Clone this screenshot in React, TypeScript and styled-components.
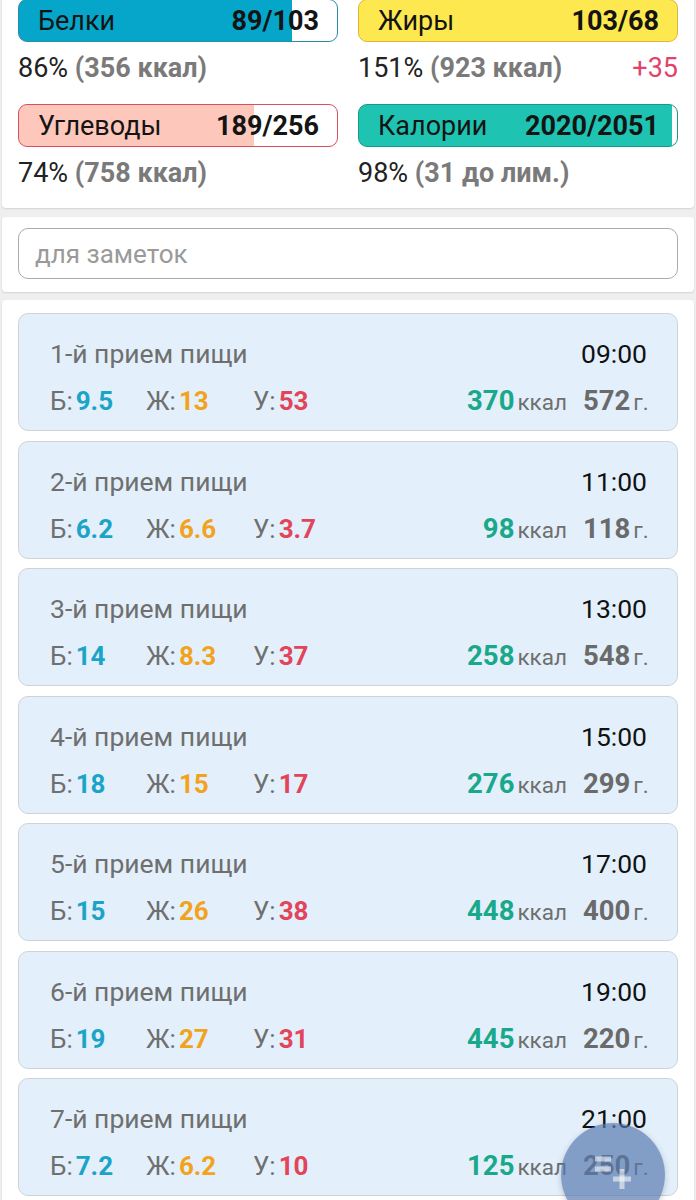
import styled, { createGlobalStyle } from "styled-components";

const GlobalStyle = createGlobalStyle`
  html, body {
    margin: 0;
    padding: 0;
    background: #efefef;
    font-family: Roboto, "Noto Sans", "Liberation Sans", sans-serif;
  }
  * { box-sizing: border-box; }
`;

const c = {
  protein: "#06a6cb",
  proteinBorder: "#2b8ca6",
  fat: "#fde94f",
  fatBorder: "#e1b43c",
  carb: "#fdc8bb",
  carbBorder: "#d8505c",
  kcal: "#1ec3b1",
  kcalBorder: "#15998b",
  blueText: "#1ba4c7",
  orangeText: "#f2a31e",
  redText: "#e2445a",
  tealText: "#1aa88b",
  grey: "#6f6f6f",
};

const Page = styled.div`
  width: 696px;
  height: 1200px;
  overflow: hidden;
  position: relative;
  padding: 0 2px;
`;

const Panel = styled.section`
  background: #ffffff;
  border-radius: 0 0 4px 4px;
  box-shadow: 0 1px 2px rgba(0, 0, 0, 0.12);
`;

const SummaryPanel = styled(Panel)`
  margin-top: -1px;
  padding: 0 16px 9px;
  display: grid;
  grid-template-columns: 1fr 1fr;
  column-gap: 20px;
  row-gap: 10px;
`;

const Cell = styled.div`
  display: flex;
  flex-direction: column;
`;

const Bar = styled.div<{ $fill: string; $border: string; $pct: number }>`
  height: 43px;
  border-radius: 9px;
  border: 1.5px solid ${(p) => p.$border};
  background: linear-gradient(
    90deg,
    ${(p) => p.$fill} 0%,
    ${(p) => p.$fill} ${(p) => p.$pct}%,
    #ffffff ${(p) => p.$pct}%
  );
  display: flex;
  align-items: center;
  justify-content: space-between;
  padding: 0 18px 0 19px;
  font-size: 27px;
  color: #141414;
`;

const BarValue = styled.span`
  font-weight: 700;
`;

const StatLine = styled.div`
  height: 52px;
  line-height: 52px;
  display: flex;
  justify-content: space-between;
  font-size: 27px;
  color: #222;
`;

const StatMuted = styled.span`
  color: #7a7a7a;
  font-weight: 700;
`;

const Over = styled.span`
  color: #e2436a;
`;

const NotesPanel = styled(Panel)`
  margin-top: 9px;
  border-radius: 4px;
  padding: 11px 16px 13px;
`;

const NotesInput = styled.input`
  display: block;
  width: 100%;
  height: 51px;
  border: 1.5px solid #ababab;
  border-radius: 10px;
  padding: 0 16px;
  font-family: Roboto, "Noto Sans", sans-serif;
  font-size: 26px;
  color: #333;
  background: #fff;
  outline: none;
  &::placeholder {
    color: #9a9a9a;
  }
`;

const MealPanel = styled(Panel)`
  margin-top: 8px;
  border-radius: 4px;
  padding: 13px 16px 20px;
  display: flex;
  flex-direction: column;
  gap: 9.5px;
`;

const MealCard = styled.article`
  height: 118px;
  background: #e3f0fb;
  border: 1.5px solid #cfd3d6;
  border-radius: 10px;
  padding: 25px 30px 0 31px;
  display: flex;
  flex-direction: column;
  gap: 17px;
`;

const MealRow = styled.div`
  display: flex;
  align-items: baseline;
  justify-content: space-between;
  height: 30px;
  line-height: 30px;
`;

const MealTitle = styled.span`
  font-size: 26.5px;
  color: ${c.grey};
`;

const MealTime = styled.span`
  font-size: 26.5px;
  color: #111;
`;

const Macros = styled.div`
  display: flex;
  align-items: baseline;
`;

const Macro = styled.span<{ $w: number }>`
  width: ${(p) => p.$w}px;
  font-size: 26px;
  color: ${c.grey};
  white-space: nowrap;
`;

const MacroValue = styled.b<{ $color: string }>`
  color: ${(p) => p.$color};
  font-weight: 700;
  margin-left: 3px;
`;

const Totals = styled.div`
  display: flex;
  align-items: baseline;
  gap: 16px;
`;

const Amount = styled.span<{ $w?: number }>`
  ${(p) => (p.$w ? `width: ${p.$w}px;` : "")}
  white-space: nowrap;
`;

const Num = styled.b<{ $color: string }>`
  font-size: 27.5px;
  font-weight: 700;
  color: ${(p) => p.$color};
  margin-right: 3px;
`;

const Unit = styled.span`
  font-size: 22.5px;
  color: ${c.grey};
`;

const Fab = styled.button`
  position: absolute;
  left: 561px;
  top: 1123px;
  width: 104px;
  height: 104px;
  border-radius: 50%;
  border: none;
  background: rgba(86, 120, 172, 0.68);
  display: flex;
  align-items: flex-start;
  justify-content: center;
  padding: 26px 0 0 0;
  box-shadow: 0 2px 6px rgba(0, 0, 0, 0.2);
`;

function PlaylistAddIcon() {
  return (
    <svg width="40" height="40" viewBox="0 0 40 40" fill="none">
      <g stroke="rgba(255,255,255,0.55)" strokeWidth="5" strokeLinecap="butt">
        <path d="M2 10h16" />
        <path d="M2 20h16" />
        <path d="M20 30h18" />
        <path d="M29 20v20" />
      </g>
    </svg>
  );
}

const meals = [
  { n: 1, t: "09:00", b: "9.5", f: "13", u: "53", k: 370, g: 572 },
  { n: 2, t: "11:00", b: "6.2", f: "6.6", u: "3.7", k: 98, g: 118 },
  { n: 3, t: "13:00", b: "14", f: "8.3", u: "37", k: 258, g: 548 },
  { n: 4, t: "15:00", b: "18", f: "15", u: "17", k: 276, g: 299 },
  { n: 5, t: "17:00", b: "15", f: "26", u: "38", k: 448, g: 400 },
  { n: 6, t: "19:00", b: "19", f: "27", u: "31", k: 445, g: 220 },
  { n: 7, t: "21:00", b: "7.2", f: "6.2", u: "10", k: 125, g: 250 },
];

export default function App() {
  return (
    <Page>
      <GlobalStyle />
      <SummaryPanel>
        <Cell>
          <Bar $fill={c.protein} $border={c.proteinBorder} $pct={86}>
            <span>Белки</span>
            <BarValue>89/103</BarValue>
          </Bar>
          <StatLine>
            <span>
              86% <StatMuted>(356 ккал)</StatMuted>
            </span>
          </StatLine>
        </Cell>
        <Cell>
          <Bar $fill={c.fat} $border={c.fatBorder} $pct={100}>
            <span>Жиры</span>
            <BarValue>103/68</BarValue>
          </Bar>
          <StatLine>
            <span>
              151% <StatMuted>(923 ккал)</StatMuted>
            </span>
            <Over>+35</Over>
          </StatLine>
        </Cell>
        <Cell>
          <Bar $fill={c.carb} $border={c.carbBorder} $pct={74}>
            <span>Углеводы</span>
            <BarValue>189/256</BarValue>
          </Bar>
          <StatLine>
            <span>
              74% <StatMuted>(758 ккал)</StatMuted>
            </span>
          </StatLine>
        </Cell>
        <Cell>
          <Bar $fill={c.kcal} $border={c.kcalBorder} $pct={98.5}>
            <span>Калории</span>
            <BarValue>2020/2051</BarValue>
          </Bar>
          <StatLine>
            <span>
              98% <StatMuted>(31 до лим.)</StatMuted>
            </span>
          </StatLine>
        </Cell>
      </SummaryPanel>

      <NotesPanel>
        <NotesInput placeholder="для заметок" />
      </NotesPanel>

      <MealPanel>
        {meals.map((m) => (
          <MealCard key={m.n}>
            <MealRow>
              <MealTitle>{m.n}-й прием пищи</MealTitle>
              <MealTime>{m.t}</MealTime>
            </MealRow>
            <MealRow>
              <Macros>
                <Macro $w={96}>
                  Б:<MacroValue $color={c.blueText}>{m.b}</MacroValue>
                </Macro>
                <Macro $w={107}>
                  Ж:<MacroValue $color={c.orangeText}>{m.f}</MacroValue>
                </Macro>
                <Macro $w={90}>
                  У:<MacroValue $color={c.redText}>{m.u}</MacroValue>
                </Macro>
              </Macros>
              <Totals>
                <Amount>
                  <Num $color={c.tealText}>{m.k}</Num>
                  <Unit>ккал</Unit>
                </Amount>
                <Amount $w={64}>
                  <Num $color="#6a6a6a">{m.g}</Num>
                  <Unit>г.</Unit>
                </Amount>
              </Totals>
            </MealRow>
          </MealCard>
        ))}
      </MealPanel>

      <Fab aria-label="Добавить">
        <PlaylistAddIcon />
      </Fab>
    </Page>
  );
}
